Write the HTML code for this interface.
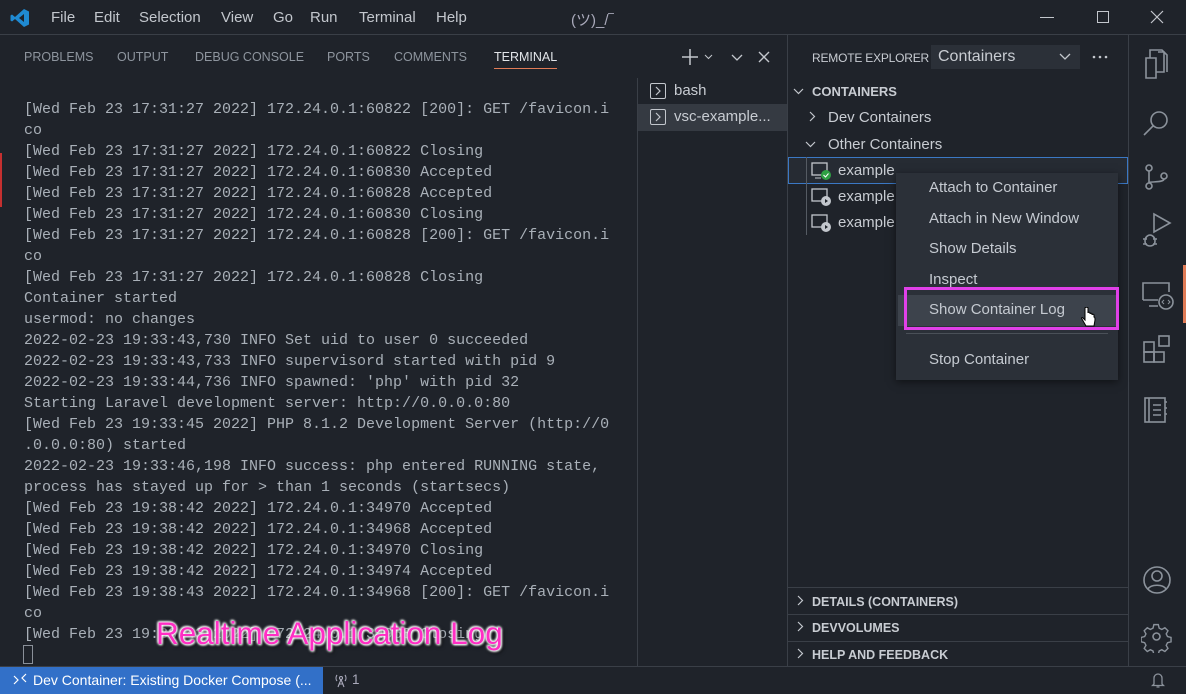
<!DOCTYPE html>
<html><head><meta charset="utf-8"><style>
*{margin:0;padding:0;box-sizing:border-box}
body{width:1186px;height:694px;background:#1f232a;font-family:"Liberation Sans","Noto Sans CJK JP",sans-serif;color:#c8ccd2;position:relative;overflow:hidden}
.a{position:absolute}
.term{font-family:"Liberation Mono",monospace;font-size:15px;color:#a9b0b8;line-height:21px;white-space:pre;left:24px;top:99px}
.tab{font-size:12.5px;color:#8e959e;top:50px}
.ctx div{height:30.5px;line-height:30.5px;padding-left:33px;font-size:15px;color:#c5cad1}
.sec{font-size:12.5px;font-weight:bold;color:#c8ccd2;left:812px}
svg{position:absolute}
</style></head><body>
<div class="a" style="left:0;top:0;width:1186px;height:35px;background:#1f232a;border-bottom:1px solid #3a3f47"></div>
<svg style="left:10px;top:8px" width="20" height="20" viewBox="0 0 20 20"><path d="M14 1 L19 3.5 V16.5 L14 19 L5 11 L2 13.5 L0.5 12.5 V7.5 L2 6.5 L5 9 Z M14 6 L9 10 L14 14 Z" fill="#1f8ad2" fill-rule="evenodd"/></svg>
<div class="a" style="left:51px;top:9px;font-size:15px;color:#c3c7cd">
<span style="position:absolute;left:0">File</span><span style="position:absolute;left:43px">Edit</span><span style="position:absolute;left:88px">Selection</span><span style="position:absolute;left:170px">View</span><span style="position:absolute;left:222px">Go</span><span style="position:absolute;left:259px">Run</span><span style="position:absolute;left:308px">Terminal</span><span style="position:absolute;left:385px;white-space:nowrap">Help</span><span style="position:absolute;left:520px;white-space:nowrap;color:#aab">(ツ)_/‾</span></div>
<div class="a" style="left:1040px;top:17px;width:14px;height:1px;background:#c3c7cd"></div>
<div class="a" style="left:1097px;top:11px;width:12px;height:12px;border:1px solid #c3c7cd"></div>
<svg style="left:1150px;top:10px" width="14" height="14"><path d="M1 1L13 13M13 1L1 13" stroke="#c3c7cd" stroke-width="1.2"/></svg>
<div class="a tab" style="left:24px">PROBLEMS</div>
<div class="a tab" style="left:117px">OUTPUT</div>
<div class="a tab" style="left:195px">DEBUG CONSOLE</div>
<div class="a tab" style="left:327px">PORTS</div>
<div class="a tab" style="left:394px">COMMENTS</div>
<div class="a tab" style="left:494px;color:#e2e5e9">TERMINAL</div>
<div class="a" style="left:494px;top:68px;width:63px;height:1px;background:#e07b56"></div>
<svg style="left:680px;top:47px" width="95" height="20"><path d="M10 2V18M2 10H18" stroke="#c3c7cd" stroke-width="1.5"/><path d="M25 8l3.5 3.5L32 8" stroke="#c3c7cd" fill="none"/><path d="M52 8l5 5 5-5" stroke="#c3c7cd" fill="none" stroke-width="1.3"/><path d="M79 5l10 10M89 5L79 15" stroke="#c3c7cd" stroke-width="1.4"/></svg>
<div class="a" style="left:0;top:153px;width:2px;height:54px;background:#c53030"></div>
<div class="a term">[Wed Feb 23 17:31:27 2022] 172.24.0.1:60822 [200]: GET /favicon.i
co
[Wed Feb 23 17:31:27 2022] 172.24.0.1:60822 Closing
[Wed Feb 23 17:31:27 2022] 172.24.0.1:60830 Accepted
[Wed Feb 23 17:31:27 2022] 172.24.0.1:60828 Accepted
[Wed Feb 23 17:31:27 2022] 172.24.0.1:60830 Closing
[Wed Feb 23 17:31:27 2022] 172.24.0.1:60828 [200]: GET /favicon.i
co
[Wed Feb 23 17:31:27 2022] 172.24.0.1:60828 Closing
Container started
usermod: no changes
2022-02-23 19:33:43,730 INFO Set uid to user 0 succeeded
2022-02-23 19:33:43,733 INFO supervisord started with pid 9
2022-02-23 19:33:44,736 INFO spawned: 'php' with pid 32
Starting Laravel development server: http://0.0.0.0:80
[Wed Feb 23 19:33:45 2022] PHP 8.1.2 Development Server (http://0
.0.0.0:80) started
2022-02-23 19:33:46,198 INFO success: php entered RUNNING state,
process has stayed up for &gt; than 1 seconds (startsecs)
[Wed Feb 23 19:38:42 2022] 172.24.0.1:34970 Accepted
[Wed Feb 23 19:38:42 2022] 172.24.0.1:34968 Accepted
[Wed Feb 23 19:38:42 2022] 172.24.0.1:34970 Closing
[Wed Feb 23 19:38:42 2022] 172.24.0.1:34974 Accepted
[Wed Feb 23 19:38:43 2022] 172.24.0.1:34968 [200]: GET /favicon.i
co
[Wed Feb 23 19:38:43 2022] 172.24.0.1:34968 Closing</div>
<div class="a" style="left:23px;top:645px;width:10px;height:19px;border:1px solid #8a9099"></div>
<div class="a" style="left:156px;top:615px;font-size:31.5px;color:#ff2ec4;white-space:nowrap;text-shadow:0 0 2px #fff,0 0 3px #fff,1px 1px 2px #fff,-1px -1px 2px #fff,2px 2px 4px #000">Realtime Application Log</div>
<div class="a" style="left:637px;top:78px;width:1px;height:589px;background:#3a3f47"></div>
<div class="a" style="left:638px;top:104px;width:149px;height:27px;background:#353a42"></div>
<div class="a" style="left:650px;top:83px;width:16px;height:16px;border:1px solid #c3c7cd;border-radius:2px"></div>
<div class="a" style="left:650px;top:109px;width:16px;height:16px;border:1px solid #c3c7cd;border-radius:2px"></div>
<svg style="left:650px;top:83px" width="16" height="45"><path d="M6 4l4 4-4 4M6 30l4 4-4 4" stroke="#c3c7cd" fill="none" stroke-width="1.2"/></svg>
<div class="a" style="left:674px;top:82px;font-size:15px;color:#c8ccd2">bash</div>
<div class="a" style="left:674px;top:108px;font-size:15px;color:#c8ccd2">vsc-example...</div>
<div class="a" style="left:787px;top:35px;width:1px;height:632px;background:#3a3f47"></div>
<div class="a" style="left:1128px;top:35px;width:1px;height:632px;background:#3a3f47"></div>
<div class="a" style="left:812px;top:51px;font-size:12px;color:#c8ccd2;letter-spacing:-0.2px">REMOTE EXPLORER</div>
<div class="a" style="left:931px;top:45px;width:149px;height:24px;background:#2b3038"></div>
<div class="a" style="left:938px;top:48px;font-size:16px;color:#c8ccd2">Containers</div>
<svg style="left:1058px;top:50px" width="90" height="14"><path d="M2 4l5 5 5-5" stroke="#c3c7cd" fill="none" stroke-width="1.3"/><circle cx="36" cy="7" r="1.3" fill="#c3c7cd"/><circle cx="42" cy="7" r="1.3" fill="#c3c7cd"/><circle cx="48" cy="7" r="1.3" fill="#c3c7cd"/></svg>
<svg style="left:792px;top:85px" width="60" height="70"><path d="M2 4l4.5 4.5L11 4M18 27l4.5 4.5L18 36M14 57l4.5 4.5L23 57" stroke="#c3c7cd" fill="none" stroke-width="1.2"/></svg>
<div class="a sec" style="top:84px;font-size:13px">CONTAINERS</div>
<div class="a" style="left:828px;top:109px;font-size:15px">Dev Containers</div>
<div class="a" style="left:828px;top:136px;font-size:15px">Other Containers</div>
<div class="a" style="left:788px;top:157px;width:340px;height:27px;border:1px solid #3b78c4;background:#262b33"></div>
<div class="a" style="left:806px;top:157px;width:1px;height:78px;background:#555b63"></div>
<svg style="left:811px;top:162px" width="22" height="75"><rect x="1" y="1" width="15" height="12" fill="none" stroke="#c3c7cd" stroke-width="1.3"/><path d="M4 16h6" stroke="#c3c7cd"/><circle cx="15" cy="13" r="5" fill="#2ea043"/><path d="M12.5 13l2 2 3-3.5" stroke="#fff" fill="none"/><rect x="1" y="27" width="15" height="12" fill="none" stroke="#c3c7cd" stroke-width="1.3"/><circle cx="15" cy="39" r="5" fill="#c3c7cd"/><path d="M14 37v4l3-2z" fill="#1f232a"/><rect x="1" y="53" width="15" height="12" fill="none" stroke="#c3c7cd" stroke-width="1.3"/><circle cx="15" cy="65" r="5" fill="#c3c7cd"/><path d="M14 63v4l3-2z" fill="#1f232a"/></svg>
<div class="a" style="left:838px;top:162px;font-size:15px">example</div>
<div class="a" style="left:838px;top:188px;font-size:15px">example</div>
<div class="a" style="left:838px;top:214px;font-size:15px">example</div>
<div class="a ctx" style="left:896px;top:173px;width:222px;height:207px;background:#2b3038;box-shadow:0 2px 8px rgba(0,0,0,.5)">
<div>Attach to Container</div><div>Attach in New Window</div><div>Show Details</div><div>Inspect</div>
<div style="background:#3d434c;margin:0 2px;padding-left:31px">Show Container Log</div>
<div style="height:1px;border-bottom:1px solid #4a5058;margin:7px 10px 0"></div>
<div style="margin-top:11px">Stop Container</div></div>
<div class="a" style="left:904px;top:287px;width:215px;height:43px;border:3px solid #e040e8"></div>
<svg style="left:1081px;top:307px" width="16" height="22"><path d="M4 1v12l-2-2c-1-1-2 0-1 1l4 7h8l1-6c0-2 0-3-1-3V8c0-1-2-1-2 0V7c0-1-2-1-2 0V6c0-1-2-1-2 0V1c0-1-3-1-3 0z" fill="#fff" stroke="#000"/></svg>
<div class="a" style="left:788px;top:587px;width:340px;height:1px;background:#3a3f47"></div>
<div class="a" style="left:788px;top:614px;width:340px;height:1px;background:#3a3f47"></div>
<div class="a" style="left:788px;top:641px;width:340px;height:1px;background:#3a3f47"></div>
<div class="a" style="left:0;top:666px;width:1186px;height:1px;background:#3a3f47"></div>
<svg style="left:796px;top:594px" width="10" height="70"><path d="M2 2l4.5 4.5L2 11M2 28l4.5 4.5L2 37M2 55l4.5 4.5L2 64" stroke="#c3c7cd" fill="none" stroke-width="1.2"/></svg>
<div class="a sec" style="top:595px">DETAILS (CONTAINERS)</div>
<div class="a sec" style="top:621px">DEVVOLUMES</div>
<div class="a sec" style="top:648px">HELP AND FEEDBACK</div>
<div class="a" style="left:1183px;top:265px;width:3px;height:58px;background:#e07b56"></div>
<svg style="left:1140px;top:46px" width="36" height="560" fill="none" stroke="#8b929b" stroke-width="1.6">
<path d="M6 12h10v20H6zM16 26h8V6h-6M10 12V4h12l5 5v17"/>
<circle cx="19" cy="74" r="8"/><path d="M13 80l-9 9"/>
<circle cx="9" cy="122" r="3"/><circle cx="9" cy="140" r="3"/><circle cx="24" cy="130" r="3"/><path d="M9 125v12M24 133c0 4-15 2-15 4"/>
<path d="M14 168v18l16-9zM5 195c0-4 3-6 5-6s5 2 5 6-3 5-5 5-5-1-5-5zM3 193h4M13 193h4M3 198h4M13 198h4"/>
<path d="M3 254V237h26v9M3 254h15M9 260h9"/><circle cx="26" cy="256" r="7"/><path d="M24 254l-2 2 2 2M28 254l2 2-2 2" stroke-width="1"/>
<rect x="4" y="296" width="10" height="10"/><rect x="14" y="306" width="10" height="10"/><rect x="4" y="306" width="10" height="10"/><rect x="19" y="290" width="10" height="10"/>
<rect x="5" y="352" width="20" height="24"/><path d="M9 352v24M13 359h8M13 364h8M13 369h8M25 356h2M25 362h2M25 368h2"/>
<circle cx="17" cy="534" r="13"/><circle cx="17" cy="530" r="5"/><path d="M8 543c3-5 15-5 18 0"/>
</svg>
<svg style="left:1141px;top:621px" width="32" height="32" viewBox="0 0 32 32" fill="none" stroke="#8b929b" stroke-width="1.6"><path d="M13.5 3h5l1 4 3 1.5 3.5-2 3.5 3.5-2 3.5 1.5 3 4 1v5l-4 1-1.5 3 2 3.5-3.5 3.5-3.5-2-3 1.5-1 4h-5l-1-4-3-1.5-3.5 2-3.5-3.5 2-3.5-1.5-3-4-1v-5l4-1 1.5-3-2-3.5 3.5-3.5 3.5 2 3-1.5z" transform="translate(1,1) scale(0.88)"/><circle cx="15.5" cy="15.5" r="3.5"/></svg>
<div class="a" style="left:0;top:667px;width:1186px;height:27px;background:#1f232a"></div>
<div class="a" style="left:0;top:667px;width:323px;height:27px;background:#3270c8"></div>
<svg style="left:12px;top:672px" width="16" height="16"><path d="M2 4l4 4-4 4M14 2l-4 4 4 4" stroke="#fff" fill="none" stroke-width="1.2"/></svg>
<div class="a" style="left:33px;top:672px;font-size:14px;color:#fff;white-space:nowrap">Dev Container: Existing Docker Compose (...</div>
<svg style="left:333px;top:672px" width="16" height="16" fill="none" stroke="#aab" stroke-width="1.1"><circle cx="8" cy="6" r="1.5"/><path d="M8 7.5L5 15M8 7.5L11 15M6 12h4M4 3a5 5 0 0 0 0 6M12 3a5 5 0 0 1 0 6"/></svg>
<div class="a" style="left:352px;top:672px;font-size:13.5px;color:#aab">1</div>
<svg style="left:1151px;top:671px" width="14" height="18"><path d="M3 13V7a4 4 0 0 1 8 0v6l1.5 1.5h-11zM5.5 16h3" stroke="#8b929b" fill="none" stroke-width="1.3"/></svg>
</body></html>
